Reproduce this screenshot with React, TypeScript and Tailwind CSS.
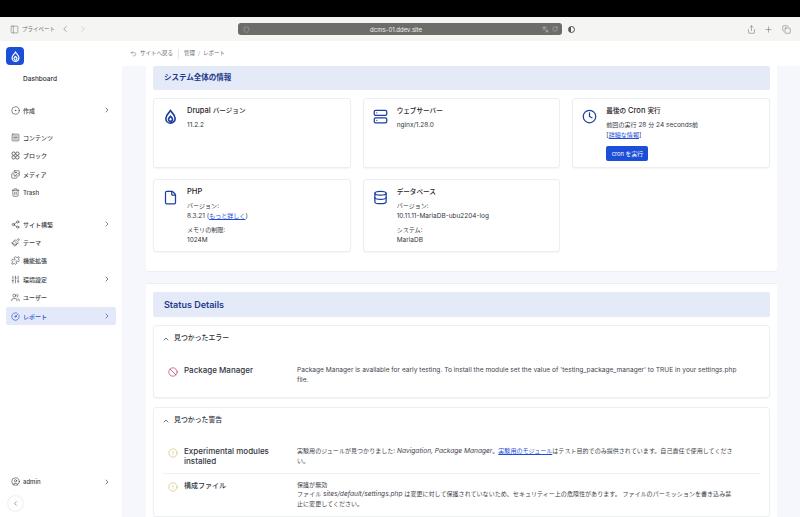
import { Ban, ChevronLeft, ChevronRight, ChevronUp, CircleAlert, CircleDot, CircleGauge, CircleUser, Clock, Copy, Database, File, Images, Languages, Paintbrush, PanelLeft, Plus, Puzzle, RotateCw, Server, Share, Share2, Shield, SlidersVertical, SquareMenu, Trash2, Undo2, Users } from "lucide-react";
import React from "react";

const font = { fontFamily: '"Inter", "Noto Sans CJK JP", sans-serif' };

const DrupalDrop = ({ className }: { className?: string }) => (
    <svg viewBox="0 0 24 24" className={className} fill="none" stroke="currentColor" strokeWidth="2.6" strokeLinejoin="round">
        <path d="M12 2c1 3.5 7.5 7 7.5 13a7.5 7.5 0 0 1-15 0C4.500 9 11 5.500 12 2z" />
        <path d="M12 11.500c.8 1.500 3.200 2.800 3.200 5a3.200 3.200 0 0 1-6.400 0c0-2.200 2.400-3.500 3.200-5z" />
    </svg>
);

const BlocksIcon = ({ size, className }: { size?: number; className?: string }) => (
    <svg viewBox="0 0 24 24" width={size} height={size} className={className} fill="none" stroke="currentColor" strokeWidth="2">
        <circle cx="7" cy="7" r="4.500" />
        <circle cx="17" cy="7" r="4.500" />
        <circle cx="7" cy="17" r="4.500" />
        <circle cx="17" cy="17" r="4.500" />
    </svg>
);

// body text: the japanese glyphs sit a bit smaller than the latin ones in the screenshot
const J = ({ children }: { children: React.ReactNode }) => <span className="text-[6.050px] leading-none">{children}</span>;

const NavItem = ({ icon: Icon, label, arrow, active }: { icon: React.ElementType; label: string; arrow?: boolean; active?: boolean }) => (
    <div className={`flex items-center h-[18.400px] px-[5px] rounded-[2px] ${active ? "bg-[#e3e9f8] text-[#1d4ed8]" : "text-[#3b3f46]"}`}>
        <Icon size={9} strokeWidth={1.6} className="shrink-0" />
        <span className="ml-[3px] text-[6px] font-medium flex-1 whitespace-nowrap">{label}</span>
        {arrow && <ChevronRight size={8} strokeWidth={2} className="shrink-0" />}
    </div>
);

const Sidebar = () => (
    <aside className="w-[122px] shrink-0 bg-white flex flex-col px-[6px]">
        <div className="mt-[6px] w-[18px] h-[18px] rounded-[4px] bg-[#1d4ed8] flex items-center justify-center text-white">
            <DrupalDrop className="w-[11px] h-[11px]" />
        </div>
        <div className="mt-[9px] ml-[17px] text-[6.500px] font-medium text-[#2b2f36] leading-[10px]">Dashboard</div>
        <div className="mt-[17px]">
            <NavItem icon={CircleDot} label="作成" arrow />
        </div>
        <div className="mt-[9px]">
            <NavItem icon={SquareMenu} label="コンテンツ" />
            <NavItem icon={BlocksIcon} label="ブロック" />
            <NavItem icon={Images} label="メディア" />
            <NavItem icon={Trash2} label="Trash" />
        </div>
        <div className="mt-[13px]">
            <NavItem icon={Share2} label="サイト構築" arrow />
            <NavItem icon={Paintbrush} label="テーマ" />
            <NavItem icon={Puzzle} label="機能拡張" />
            <NavItem icon={SlidersVertical} label="環境設定" arrow />
            <NavItem icon={Users} label="ユーザー" />
            <NavItem icon={CircleGauge} label="レポート" arrow active />
        </div>
        <div className="mt-auto mb-[6px]">
            <NavItem icon={CircleUser} label="admin" arrow />
            <div className="mt-[5px] ml-[2px] w-[15px] h-[15px] rounded-full bg-white shadow-[0_0_2px_rgba(0,0,0,0.2)] flex items-center justify-center text-[#555]">
                <ChevronLeft size={7} strokeWidth={2} />
            </div>
        </div>
    </aside>
);

const InfoCard = ({ icon, title, children }: { icon: React.ReactNode; title: React.ReactNode; children?: React.ReactNode }) => (
    <div className="bg-white rounded-[3px] border border-[#eceef2] shadow-[0_1px_1px_rgba(0,0,0,0.04)] flex pl-[9px] pr-[6px] pt-[7px] pb-[6px] min-h-[70px]">
        <div className="w-[15px] h-[15px] mt-[3px] text-[#1e3f9e] shrink-0">{icon}</div>
        <div className="ml-[9px] min-w-0 text-[#333841] text-[6.500px] leading-[9.500px]">
            <div className="text-[7.500px] font-medium text-[#1f2329] leading-[10px] mb-[5px]">{title}</div>
            {children}
        </div>
    </div>
);

const StatusRow = ({ icon, title, children, className }: { icon: React.ReactNode; title: React.ReactNode; children: React.ReactNode; className?: string }) => (
    <div className={`flex mx-[9px] ${className ?? "py-[6px]"}`}>
        <div className="w-[21px] pl-[5px] pt-[1px] shrink-0">{icon}</div>
        <div className="w-[113px] shrink-0 pr-[6px] text-[8px] leading-[9.500px] font-medium text-[#30343b]">{title}</div>
        <div className="flex-1 text-[6.600px] leading-[9.800px] text-[#3f444c] pr-[22px]">{children}</div>
    </div>
);

export default function App() {
    return (
        <div className="w-[800px] h-[517px] overflow-hidden flex flex-col bg-white" style={font}>
            <div className="h-[17px] bg-black shrink-0" />
            <div className="h-[24px] shrink-0 bg-[#f5f5f4] flex items-center text-[#6c6c6c]">
                <PanelLeft size={9} strokeWidth={1.4} className="ml-[10px]" />
                <span className="ml-[3px] text-[5.500px]">プライベート</span>
                <ChevronLeft size={10} strokeWidth={1.4} className="ml-[5px]" />
                <ChevronRight size={10} strokeWidth={1.4} className="ml-[8px] text-[#b5b5b5]" />
                <div className="ml-[150px] w-[324px] h-[12.500px] rounded-[3px] bg-[#6c6c69] flex items-center px-[3px] text-white">
                    <Shield size={7} strokeWidth={1.4} className="text-[#c8c8c8] ml-[2px]" />
                    <span className="flex-1 text-center text-[6px] text-[#f2f2f2]">dcms-01.ddev.site</span>
                    <Languages size={7} strokeWidth={1.4} className="text-[#d8d8d8] mr-[3px]" />
                    <RotateCw size={6} strokeWidth={1.4} className="text-[#d8d8d8] mr-[1px]" />
                </div>
                <div className="ml-[6px] w-[7px] h-[7px] rounded-full border border-[#555] bg-[linear-gradient(90deg,#555_50%,transparent_50%)]" />
                <div className="flex-1" />
                <Share size={9} strokeWidth={1.4} className="mr-[8px]" />
                <Plus size={9} strokeWidth={1.4} className="mr-[9px]" />
                <Copy size={9} strokeWidth={1.4} className="mr-[9px]" />
            </div>
            <div className="flex flex-1 min-h-0">
                <Sidebar />
                <div className="flex-1 min-w-0 flex flex-col">
                    <div className="h-[25px] shrink-0 bg-white flex items-center pl-[8px] text-[#666b73] text-[5.500px]">
                        <Undo2 size={7} strokeWidth={1.6} />
                        <span className="ml-[3px]">サイトへ戻る</span>
                        <div className="w-px h-[10px] bg-[#e5e7eb] mx-[5px]" />
                        <span>管理</span>
                        <span className="mx-[3px] text-[#a0a4ab]">/</span>
                        <span>レポート</span>
                    </div>
                    <div className="flex-1 min-h-0 bg-[#f5f7fd] pl-[24px] pr-[23px]">
                        <div className="bg-white px-[7px] pb-[19px] rounded-b-[3px] border-b border-[#eceef2]">
                            <div className="h-[24px] bg-[#e4eaf8] rounded-[2px] flex items-center pl-[11px] text-[7.500px] font-semibold text-[#1e3a8a]">システム全体の情報</div>
                            <div className="grid grid-cols-3 gap-x-[12px] gap-y-[11px] mt-[8px]">
                                <InfoCard icon={<DrupalDrop className="w-full h-full" />} title={<>Drupal <span className="text-[6.600px]">バージョン</span></>}>
                                    <div>11.2.2</div>
                                </InfoCard>
                                <InfoCard icon={<Server className="w-full h-full" strokeWidth={2} />} title={<span className="text-[6.600px]">ウェブサーバー</span>}>
                                    <div>nginx/1.28.0</div>
                                </InfoCard>
                                <InfoCard icon={<Clock className="w-full h-full" strokeWidth={2} />} title={<><span className="text-[6.600px]">最後の</span> Cron <span className="text-[6.600px]">実行</span></>}>
                                    <div><J>前回の実行</J> 28 <J>分</J> 24 seconds<J>前</J></div>
                                    <div>[<a className="text-[#1d4ed8] underline"><J>詳細な情報</J></a>]</div>
                                    <button className="mt-[6px] h-[15px] w-[42px] rounded-[2px] bg-[#1d4ed8] text-white text-[5.800px] flex items-center justify-center">cron を実行</button>
                                </InfoCard>
                                <InfoCard icon={<File className="w-full h-full" strokeWidth={2} />} title="PHP">
                                    <div className="mt-[2px]"><J>バージョン</J>:</div>
                                    <div>8.3.21 (<a className="text-[#1d4ed8] underline"><J>もっと詳しく</J></a>)</div>
                                    <div className="mt-[5px]"><J>メモリの制限</J>:</div>
                                    <div>1024M</div>
                                </InfoCard>
                                <InfoCard icon={<Database className="w-full h-full" strokeWidth={2} />} title={<span className="text-[6.600px]">データベース</span>}>
                                    <div className="mt-[2px]"><J>バージョン</J>:</div>
                                    <div>10.11.11-MariaDB-ubu2204-log</div>
                                    <div className="mt-[5px]"><J>システム</J>:</div>
                                    <div>MariaDB</div>
                                </InfoCard>
                            </div>
                        </div>
                        <div className="mt-[11px] bg-white border-t border-[#eceef2] px-[7px] pt-[8px] pb-[20px]">
                            <div className="h-[25px] bg-[#e4eaf8] rounded-[2px] flex items-center pl-[11px] text-[9px] font-semibold text-[#1e3a8a]">Status Details</div>
                            <div className="mt-[8px] bg-white rounded-[3px] border border-[#eceef2] shadow-[0_1px_1px_rgba(0,0,0,0.04)] h-[73px]">
                                <div className="flex items-center h-[25px] pl-[8px] text-[6.900px] font-medium text-[#2b2f36]">
                                    <ChevronUp size={8} strokeWidth={2} />
                                    <span className="ml-[4px]">見つかったエラー</span>
                                </div>
                                <div className="mt-[9px]">
                                    <StatusRow icon={<Ban size={10} strokeWidth={1.6} className="text-[#be2f57]" />} title="Package Manager">
                                        Package Manager is available for early testing. To install the module set the value of 'testing_package_manager' to TRUE in your settings.php file.
                                    </StatusRow>
                                </div>
                            </div>
                            <div className="mt-[9px] bg-white rounded-[3px] border border-[#eceef2] shadow-[0_1px_1px_rgba(0,0,0,0.04)]">
                                <div className="flex items-center h-[25px] pl-[8px] text-[6.900px] font-medium text-[#2b2f36]">
                                    <ChevronUp size={8} strokeWidth={2} />
                                    <span className="ml-[4px]">見つかった警告</span>
                                </div>
                                <div className="mt-[8px]">
                                    <StatusRow className="pt-[6px] pb-[6px] border-b border-[#eff0f3]" icon={<CircleAlert size={10} strokeWidth={1.5} className="text-[#c9bd5a]" />} title="Experimental modules installed">
                                        <J>実験用のジュールが見つかりました</J>: <em>Navigation, Package Manager</em><J>。</J><a className="text-[#1d4ed8] underline"><J>実験用のモジュール</J></a><J>はテスト目的でのみ提供されています。自己責任で使用してください。</J>
                                    </StatusRow>
                                    <StatusRow className="pt-[7px] pb-[6px]" icon={<CircleAlert size={10} strokeWidth={1.5} className="text-[#c9bd5a]" />} title={<span className="text-[7px]">構成ファイル</span>}>
                                        <div className="pr-[4px]">
                                            <J>保護が無効</J><br />
                                            <J>ファイル</J> <em>sites/default/settings.php</em> <J>は変更に対して保護されていないため、セキュリティー上の危険性があります。 ファイルのパーミッションを書き込み禁止に変更してください。</J>
                                        </div>
                                    </StatusRow>
                                </div>
                            </div>
                        </div>
                    </div>
                </div>
            </div>
        </div>
    );
}
